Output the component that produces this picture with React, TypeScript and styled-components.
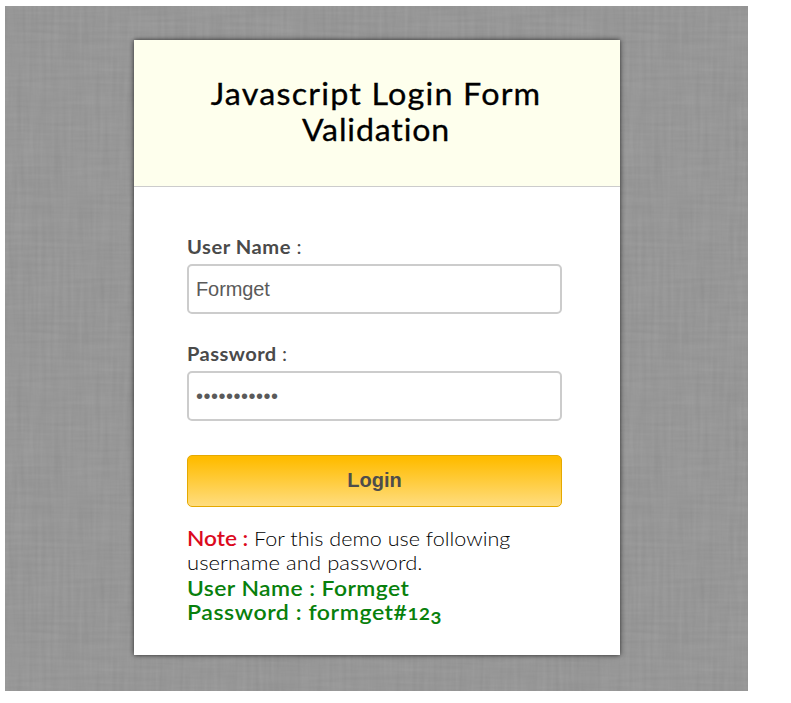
import React from "react";
import styled, { createGlobalStyle } from "styled-components";

const grain = (freq: string, seed: number) =>
  `<filter id="f${seed}" x="0" y="0" width="100%" height="100%"><feTurbulence type="fractalNoise" baseFrequency="${freq}" numOctaves="2" seed="${seed}" stitchTiles="stitch"/><feColorMatrix type="matrix" values="0.6 0 0 0 0.3  0.6 0 0 0 0.3  0.6 0 0 0 0.3  0 0 0 0 0.07"/></filter><rect width="300" height="300" filter="url(#f${seed})"/>`;
const linen = encodeURIComponent(
  `<svg xmlns="http://www.w3.org/2000/svg" width="300" height="300" color-interpolation-filters="sRGB">${grain("0.015 0.24", 4)}${grain("0.24 0.015", 9)}</svg>`
);

const GlobalStyle = createGlobalStyle`
  *, *::before, *::after { box-sizing: border-box; }
  body { margin: 0; background: #fff; font-family: Lato, "Open Sans", sans-serif; }
`;

const Backdrop = styled.main`
  width: 743px;
  height: 685px;
  margin: 6px 0 0 5px;
  padding: 34px 0 0 129px;
  background: #979797 url("data:image/svg+xml,${linen}");
`;

const Card = styled.section`
  width: 486px;
  height: 615px;
  background: #fff;
  box-shadow: 0 0 5px rgba(0, 0, 0, 0.75);
`;

const Header = styled.header`
  height: 147px;
  padding-top: 35px;
  background: #feffed;
  border-bottom: 1px solid #ccc;
`;

const Title = styled.h2`
  margin: 0 2px 0 0;
  font-size: 30px;
  font-weight: 400;
  line-height: 36px;
  color: #000;
  text-align: center;
  -webkit-text-stroke: 0.3px #000;
`;

const Line = styled.span<{ $spacing?: number; $stretch?: number; $centered?: boolean }>`
  display: block;
  white-space: nowrap;
  letter-spacing: ${(p) => p.$spacing ?? 0}px;
  transform: scaleX(${(p) => p.$stretch ?? 1});
  transform-origin: ${(p) => (p.$centered ? "center" : "left")};
`;

const Form = styled.form`
  padding: 48px 57px 0 53px;
`;

const Label = styled.label`
  display: block;
  height: 29px;
  font-size: 19px;
  line-height: 24px;
  font-weight: 700;
  color: #4a4a4a;
`;

const Colon = styled.span`
  font-weight: 400;
`;

const Field = styled.input<{ $spacing?: number }>`
  display: block;
  width: 375px;
  height: 50px;
  margin: 0 0 28px;
  padding: 0 7px;
  border: 2px solid #ccc;
  border-radius: 5px;
  outline: none;
  background: #fff;
  font: 20px "Liberation Sans", Arial, sans-serif;
  color: #5a5a5a;
  letter-spacing: ${(p) => p.$spacing ?? 0}px;
`;

const LoginButton = styled.button`
  display: block;
  width: 375px;
  height: 52px;
  margin-top: 34px;
  padding: 0 0 2px;
  border: 1px solid #e5a900;
  border-radius: 5px;
  background: linear-gradient(#ffbc00 5%, #ffdd7f 100%);
  font: bold 20px "Liberation Sans", Arial, sans-serif;
  color: #4e4d4b;
`;

const Note = styled.p`
  margin: 19px 0 0;
  font-size: 20px;
  font-weight: 300;
  line-height: 24px;
  color: #000;
`;

const Warning = styled.span`
  font-size: 21px;
  line-height: 20px;
  font-weight: 600;
  color: #dc0a1e;
`;

const Credentials = styled.p`
  margin: 2px 0 0;
  font-size: 21px;
  font-weight: 600;
  line-height: 24px;
  color: #08800c;
`;

const LowDigit = styled.span<{ $drop?: boolean }>`
  display: inline-block;
  line-height: 1;
  font-size: 17px;
  font-weight: 700;
  transform: translateY(${(p) => (p.$drop ? 4 : 0)}px);
`;

export default function App() {
  return (
    <>
      <GlobalStyle />
      <Backdrop>
        <Card>
          <Header>
            <Title>
              <Line $spacing={1.1} $stretch={1.077} $centered>Javascript Login Form</Line>
              <Line $spacing={0.8} $stretch={1.07} $centered>Validation</Line>
            </Title>
          </Header>
          <Form onSubmit={(e) => e.preventDefault()}>
            <Label htmlFor="username">
              <Line $spacing={0.5} $stretch={1.06}>
                User Name <Colon>:</Colon>
              </Line>
            </Label>
            <Field id="username" type="text" defaultValue="Formget" $spacing={-0.1} />
            <Label htmlFor="password">
              <Line $spacing={0.4} $stretch={1.06}>
                Password <Colon>:</Colon>
              </Line>
            </Label>
            <Field id="password" type="password" defaultValue="formget#123" $spacing={0.5} />
            <LoginButton type="submit">Login</LoginButton>
            <Note>
              <Line $spacing={0} $stretch={1.078}>
                <Warning>Note : </Warning>For this demo use following
              </Line>
              <Line $spacing={0.05} $stretch={1.1}>username and password.</Line>
            </Note>
            <Credentials>
              <Line $spacing={0.4} $stretch={1.09}>User Name : Formget</Line>
              <Line $spacing={0.5} $stretch={1.1}>
                Password : formget#<LowDigit>1</LowDigit>
                <LowDigit>2</LowDigit>
                <LowDigit $drop>3</LowDigit>
              </Line>
            </Credentials>
          </Form>
        </Card>
      </Backdrop>
    </>
  );
}
